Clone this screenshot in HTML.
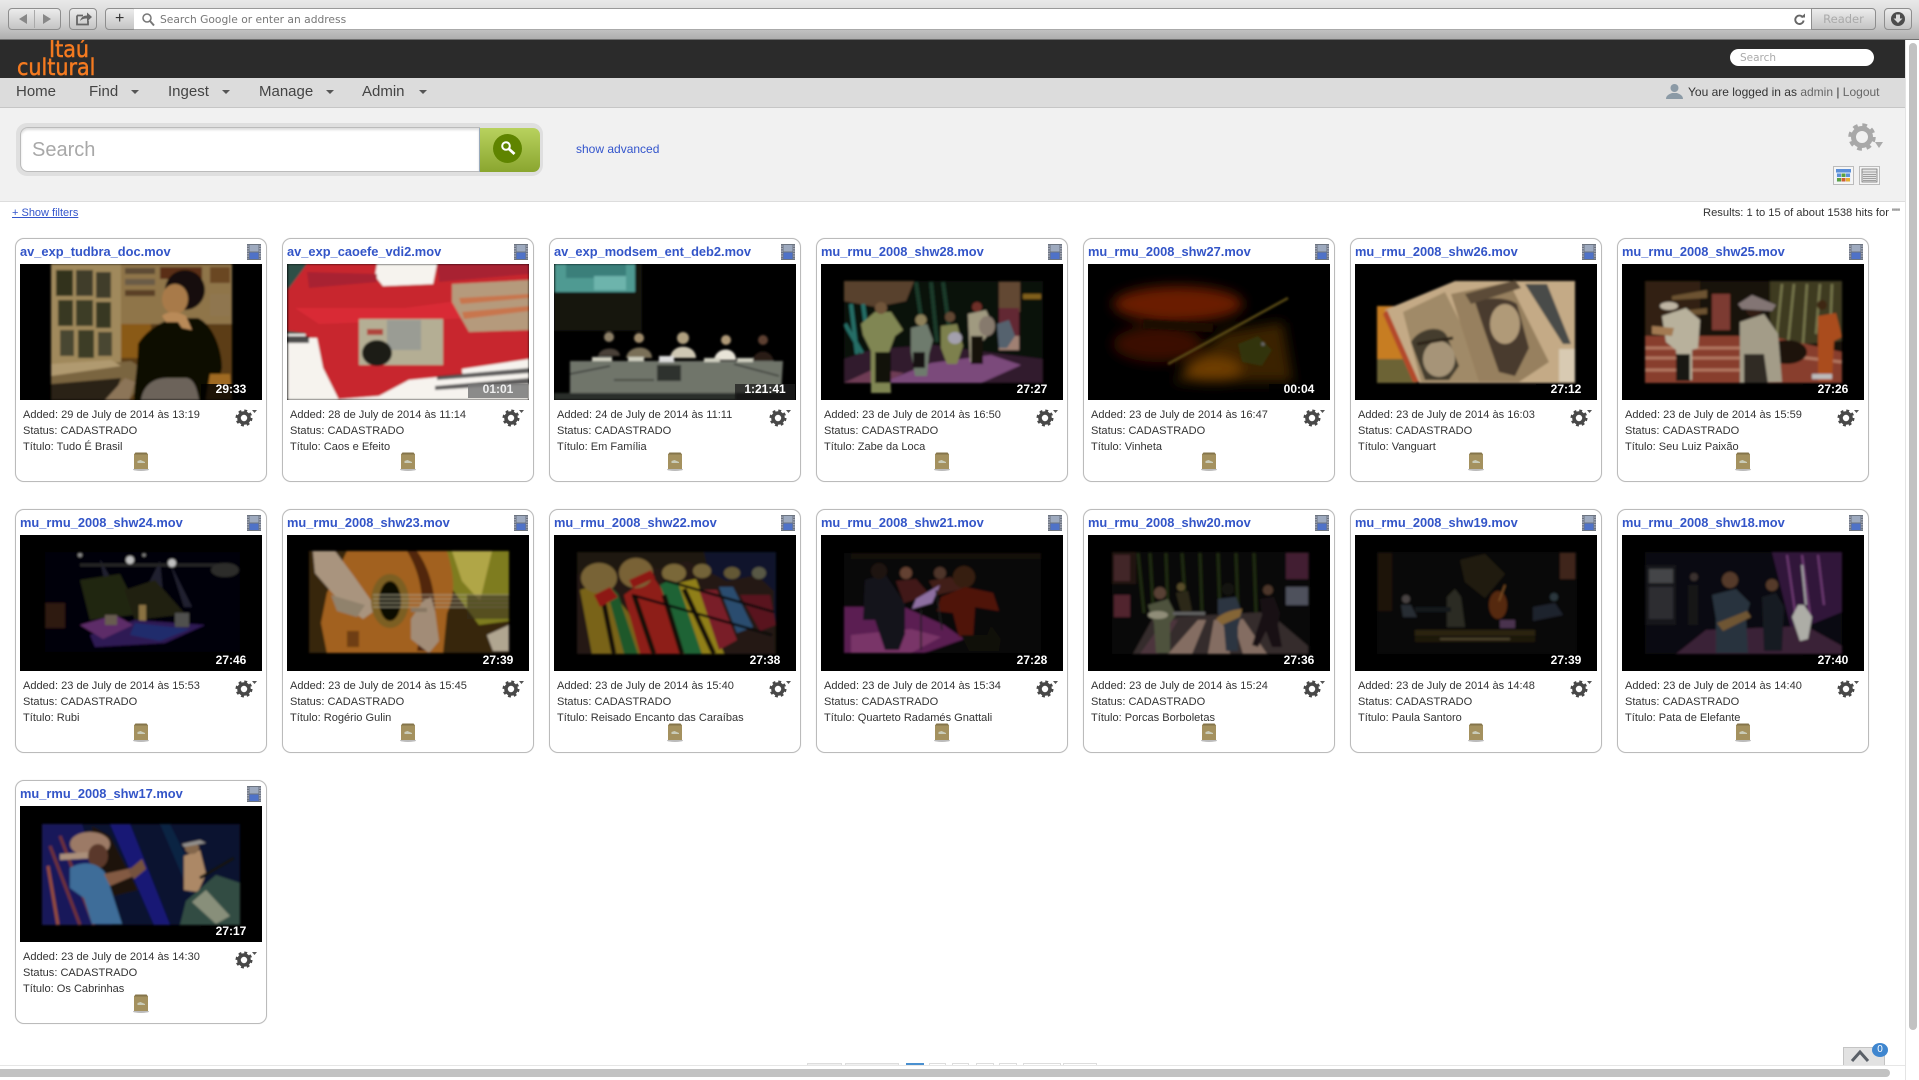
<!DOCTYPE html>
<html><head><meta charset="utf-8"><title>Itaú Cultural</title>
<style>
html,body{margin:0;padding:0;background:#fff;width:1919px;height:1080px;overflow:hidden}
body{position:relative;font-family:"Liberation Sans",sans-serif;color:#333}
div,span,a,svg{position:absolute;display:block}
a{color:#3355cc;text-decoration:none}
.sb{background:linear-gradient(#ececec,#c4c4c4);border:1px solid #8e8e8e;border-radius:4px;box-sizing:border-box;height:22px;top:8px}
.n{top:82px;font-size:15px;line-height:20px;color:#444;white-space:nowrap}
.ar{width:0;height:0;border-left:4px solid transparent;border-right:4px solid transparent;border-top:4px solid #555;top:90px}
.c{width:252px;height:244px;box-sizing:border-box;border:1px solid #bbb;border-radius:9px;background:#fff;box-shadow:0 0 1px #ddd}
.t{left:4px;top:4px;font-size:12.85px;font-weight:bold;line-height:18px;white-space:nowrap;color:#3355c8}
.f{left:231px;top:5px;width:14px;height:16px}
.th{left:4px;top:25px;width:242px;height:136px;background:#000;overflow:hidden}
.th svg{left:0;top:0;width:242px;height:136px}
.d{right:1px;top:120px;width:60px;height:16px;background:rgba(0,0,0,.82);color:#fff;font-weight:bold;font-size:12px;line-height:10px;text-align:center}
.i{left:7px;top:168px;font-size:11.05px;line-height:16px;color:#333;white-space:nowrap}
.g{left:219px;top:168px;width:22px;height:20px}
.b{left:116px;top:212px;width:18px;height:20px}
.pg{top:1063px;height:5px;border:1px solid #ddd;border-bottom:0;box-sizing:border-box;background:#fff}
</style></head><body>
<svg width="0" height="0" style="position:absolute"><defs>
<filter id="bl" x="-5%" y="-5%" width="110%" height="110%"><feGaussianBlur stdDeviation="1.1"/></filter>
<filter id="bb" x="-20%" y="-20%" width="140%" height="140%"><feGaussianBlur stdDeviation="6"/></filter>
<g id="film"><rect x="0" y="0" width="14" height="16" fill="#6c7480"/><rect x="2.500" y="1" width="9" height="6.500" fill="#9eaabf"/><rect x="2.500" y="8.500" width="9" height="6.500" fill="#4f72c8"/><path d="M1 1.500v13M13 1.500v13" stroke="#ccd" stroke-width="1.100" stroke-dasharray="1.200 1.300"/></g>
<g id="gear"><circle cx="9" cy="11" r="5" fill="none" stroke="#484848" stroke-width="3.600"/><circle cx="9" cy="11" r="7.200" fill="none" stroke="#484848" stroke-width="2.600" stroke-dasharray="2.830 2.830"/><path d="M17 3h5l-2.500 3z" fill="#555"/></g>
<g id="bag"><ellipse cx="9" cy="18.500" rx="8" ry="1.500" fill="#bbb"/><path d="M3.500 1.500h11l1.500 2v14.500h-14v-14.500z" fill="#a4915f"/><path d="M3.500 1.500h11l1.500 2h-14z" fill="#85754b"/><path d="M5.500 10l3-1 4.500 2v1h-7.500z" fill="#c9cbb8"/></g>
</defs></svg>

<!-- browser chrome -->
<div style="left:0;top:0;width:1919px;height:39px;background:linear-gradient(#e9e9e9,#d2d2d2 55%,#aeaeae)"></div>
<div style="left:0;top:39px;width:1919px;height:1px;background:#6f6f6f"></div>
<div class="sb" style="left:8px;width:53px"></div>
<div style="left:34px;top:10px;width:1px;height:18px;background:#aaa"></div>
<svg style="left:15px;top:12px" width="40" height="14"><path d="M12 2v10l-8-5zM28 2v10l8-5z" fill="#888"/></svg>
<div class="sb" style="left:69px;width:28px"></div>
<svg style="left:75px;top:11px" width="18" height="15"><path d="M2 4.500h6M2 4.500v9h11v-4" fill="none" stroke="#666" stroke-width="1.800"/><path d="M5 10c1-4 4-5.500 7-5.500v-3l5 4.500-5 4.500v-3c-3 0-5 .5-7 2.500z" fill="#666"/></svg>
<div class="sb" style="left:105px;width:32px"></div>
<div style="left:115px;top:11px;font-size:16px;line-height:16px;color:#333">+</div>
<div style="left:134px;top:8px;width:1678px;height:22px;background:#fff;border-top:1px solid #999;border-bottom:1px solid #aaa;box-sizing:border-box"></div>
<svg style="left:141px;top:12px" width="15" height="15"><circle cx="6" cy="6" r="4" fill="none" stroke="#777" stroke-width="1.500"/><path d="M9 9l4 4.500" stroke="#777" stroke-width="2"/></svg>
<div style="left:160px;top:13px;font-family:'DejaVu Sans',sans-serif;font-size:10.700px;line-height:14px;color:#777;white-space:nowrap">Search Google or enter an address</div>
<svg style="left:1793px;top:13px" width="13" height="13"><path d="M10 4.500a4.200 4.200 0 1 0 .6 3" fill="none" stroke="#666" stroke-width="1.900"/><path d="M7.500 4.500h4.500v-4z" fill="#666"/></svg>
<div class="sb" style="left:1811px;width:65px;border-radius:0 4px 4px 0;font-family:'DejaVu Sans',sans-serif;font-size:11.500px;line-height:21px;color:#aaa;text-align:center">Reader</div>
<div class="sb" style="left:1884px;width:28px"></div>
<svg style="left:1890px;top:11px" width="16" height="16"><circle cx="8" cy="8" r="7" fill="#4c4c4c"/><path d="M6 3.500h4v4h2.500l-4.500 4.500-4.500-4.500h2.500z" fill="#ddd"/></svg>

<!-- dark header -->
<div style="left:0;top:40px;width:1905px;height:38px;background:#2b2b2b;overflow:hidden">
 <div style="left:49px;top:-1px;font-family:'DejaVu Sans',sans-serif;font-size:23px;line-height:23px;color:#f47a20;-webkit-text-stroke:.5px #f47a20;transform:scaleX(.9);transform-origin:0 0;white-space:nowrap">Itaú</div>
 <div style="left:17px;top:17px;font-family:'DejaVu Sans',sans-serif;font-size:23px;line-height:23px;color:#f47a20;-webkit-text-stroke:.5px #f47a20;transform:scaleX(.9);transform-origin:0 0;white-space:nowrap">cultural</div>
 <div style="left:1730px;top:9px;width:144px;height:17px;border-radius:9px;background:#fff;font-family:'DejaVu Sans',sans-serif;font-size:10.500px;line-height:19px;color:#aaa;text-indent:10px">Search</div>
</div>

<!-- nav -->
<div style="left:0;top:78px;width:1905px;height:29px;background:#dcdcdc;border-bottom:1px solid #c6c6c6"></div>
<div class="n" style="left:16px">Home</div>
<div class="n" style="left:89px">Find</div><div class="ar" style="left:131px"></div>
<div class="n" style="left:168px">Ingest</div><div class="ar" style="left:222px"></div>
<div class="n" style="left:259px">Manage</div><div class="ar" style="left:326px"></div>
<div class="n" style="left:362px">Admin</div><div class="ar" style="left:419px"></div>
<svg style="left:1666px;top:83px" width="17" height="17"><circle cx="8.500" cy="5" r="4" fill="#8b9aa6"/><path d="M0 16c0-4 4-5 6-6h5c2 1 6 2 6 6z" fill="#8b9aa6"/></svg>
<div style="left:1688px;top:85px;font-size:12px;line-height:15px;white-space:nowrap;color:#333">You are logged in as <span style="position:static;display:inline;color:#666">admin</span> | <span style="position:static;display:inline;color:#666">Logout</span></div>

<!-- search panel -->
<div style="left:0;top:108px;width:1905px;height:94px;background:#f1f1f1;border-bottom:1px solid #ddd;box-sizing:border-box"></div>
<div style="left:16px;top:123px;width:527px;height:53px;background:#dfdfdf;border-radius:11px"></div>
<div style="left:20px;top:127px;width:460px;height:45px;background:#fff;border:1px solid #bbb;border-radius:8px 0 0 8px;box-sizing:border-box;box-shadow:inset 0 2px 2px #ddd"></div>
<div style="left:32px;top:138px;font-size:20px;line-height:24px;color:#a8a8a8">Search</div>
<div style="left:479px;top:128px;width:60px;height:44px;background:linear-gradient(#b8d25e,#8aa62f);border-radius:0 7px 7px 0;border-left:1px solid #9ab"></div>
<div style="left:493px;top:134px;width:29px;height:29px;border-radius:50%;background:#5f8400"></div>
<svg style="left:499px;top:139px" width="18" height="18"><circle cx="7" cy="7" r="3.800" fill="none" stroke="#fff" stroke-width="2"/><path d="M10 10l5.500 5" stroke="#fff" stroke-width="2.800"/></svg>
<a style="left:576px;top:142px;font-size:12px;line-height:15px;white-space:nowrap">show advanced</a>
<svg style="left:1847px;top:121px" width="38" height="32"><g transform="translate(15,16)"><circle r="8.500" fill="none" stroke="#a8a8a8" stroke-width="5"/><circle r="12" fill="none" stroke="#a8a8a8" stroke-width="3.500" stroke-dasharray="4.710 4.710"/></g><path d="M28 21h8l-4 6z" fill="#aaa"/></svg>
<svg style="left:1833px;top:166px" width="21" height="19"><rect x=".5" y=".5" width="20" height="18" fill="#f5f5f5" stroke="#bbb"/><rect x="3" y="3" width="15" height="13" fill="#eaf0fa"/><rect x="3" y="3" width="15" height="3.500" fill="#5b8fd8"/><rect x="4" y="7.500" width="4" height="3.500" fill="#5b8fd8"/><rect x="8.500" y="7.500" width="4" height="3.500" fill="#5aa040"/><rect x="13" y="7.500" width="4" height="3.500" fill="#5b8fd8"/><rect x="4" y="12" width="4" height="3.500" fill="#5aa040"/><rect x="8.500" y="12" width="4" height="3.500" fill="#d06030"/><rect x="13" y="12" width="4" height="3.500" fill="#e8b030"/></svg>
<svg style="left:1859px;top:166px" width="21" height="19"><rect x=".5" y=".5" width="20" height="18" fill="#f5f5f5" stroke="#bbb"/><rect x="3" y="3" width="15" height="13" fill="#e4e4e4" stroke="#777" stroke-width=".8"/><path d="M3 6h15M4 8.500h13M4 10.500h13M4 12.500h13M4 14.500h13" stroke="#888" stroke-width=".8"/></svg>

<a style="left:12px;top:206px;font-size:11px;line-height:14px;text-decoration:underline;white-space:nowrap">+ Show filters</a>
<div style="left:1703px;top:206px;font-size:11.200px;line-height:14px;color:#333;white-space:nowrap">Results: 1 to 15 of about 1538 hits for ""</div>

<!-- card 1 -->
<div class="c" style="left:15px;top:238px"><a class="t">av_exp_tudbra_doc.mov</a><svg class="f"><use href="#film"/></svg>
<div class="th"><svg viewBox="0 0 242 136"><g filter="url(#bl)"><rect x="31" width="181" height="136" fill="#5c3c18"/><rect x="31" width="70" height="100" fill="#a0895c"/><rect x="36" y="6" width="17" height="26" fill="#33321f"/><rect x="56" y="6" width="17" height="26" fill="#3f3e2a"/><rect x="76" y="8" width="15" height="26" fill="#3f3e2a"/><rect x="38" y="36" width="15" height="26" fill="#383722"/><rect x="56" y="36" width="17" height="26" fill="#3e3d28"/><rect x="76" y="38" width="15" height="26" fill="#383722"/><rect x="40" y="66" width="14" height="26" fill="#4a4632"/><rect x="58" y="66" width="16" height="28" fill="#3e3d28"/><rect x="78" y="68" width="14" height="24" fill="#4a4632"/><rect x="101" width="111" height="60" fill="#8f7448"/><rect x="105" y="4" width="30" height="6" fill="#5d4c36"/><rect x="105" y="15" width="30" height="6" fill="#6b5c46"/><rect x="105" y="26" width="30" height="6" fill="#5a4028"/><rect x="140" y="3" width="42" height="12" fill="#5a2e12"/><rect x="190" y="3" width="20" height="16" fill="#6a4724"/><rect x="190" y="30" width="20" height="22" fill="#8f7650"/><rect x="101" y="60" width="30" height="34" fill="#8a5a16"/><path d="M31 105l80-8 18 12-20 27H31z" fill="#7a6540"/><path d="M31 120l70-6-8 22H31z" fill="#2a2418"/><path d="M31 100l60-4 10 6-70 10z" fill="#b09a70"/><path d="M118 80c8-14 28-26 40-26h20c14 6 24 30 24 50l-8 32h-80c0-16 4-34 4-56z" fill="#0e0906"/><path d="M121 136c2-14 12-22 26-22h20c8 2 10 12 12 22z" fill="#6c645a"/><circle cx="165" cy="26" r="20" fill="#120e0c"/><ellipse cx="155" cy="35" rx="13" ry="15" fill="#a87a48"/><path d="M142 52c6-6 18-4 24 0l6 14-10-2-4-6-12 0z" fill="#b98a58"/><path d="M190 110l20 0 2 26h-26z" fill="#a06a20"/><path d="M85 136l20-22 10 4-6 18z" fill="#8c7458"/></g></svg><span class="d">29:33</span></div>
<div class="i">Added: 29 de July de 2014 às 13:19<br>Status: CADASTRADO<br>Título: Tudo É Brasil</div><svg class="g"><use href="#gear"/></svg><svg class="b"><use href="#bag"/></svg></div>

<!-- card 2 -->
<div class="c" style="left:282px;top:238px"><a class="t">av_exp_caoefe_vdi2.mov</a><svg class="f"><use href="#film"/></svg>
<div class="th"><svg viewBox="0 0 242 136"><g filter="url(#bl)"><rect width="242" height="136" fill="#f6f3ee"/><rect x="1" width="28" height="70" fill="#2f4f46"/><path d="M20 0h70l-2 12 8 10 50-2 4-20h92v100l-60 10-60 6-30 16-50 4-18-45-6-22-18-2 0-40z" fill="#c8272f"/><path d="M8 44h110l60-8 64-6v14l-60 10-150 6z" fill="#d92c36"/><path d="M20 8l70 2v8l-68 6zM150 0h92v10l-90 8z" fill="#a82330"/><path d="M165 20l77-4v50l-60 2-17-30z" fill="#b59a7c"/><path d="M172 34l70-4v4l-68 6zM175 48l67-6v5l-65 8z" fill="#c8764e"/><rect x="72" y="55" width="84" height="46" fill="#b4ae94"/><rect x="100" y="56" width="34" height="30" fill="#9a9c94"/><ellipse cx="90" cy="89" rx="15" ry="13" fill="#1a1d18"/><rect x="80" y="65" width="16" height="6" fill="#b0443c"/><path d="M0 74h30l6 30 16 32H0z" fill="#f6f3ee"/><rect x="0" y="72" width="22" height="7" fill="#222" opacity=".8"/><path d="M175 105l67-10v41h-65z" fill="#f6f3ee"/><path d="M150 112l92-8v5l-92 7zM148 122l94-8v6l-94 6z" fill="#2a2a2a" opacity=".75"/><rect y="0" width="1" height="136" fill="#000"/></g></svg><span class="d" style="background:rgba(120,120,120,.85);height:14px;color:#eee">01:01</span></div>
<div class="i">Added: 28 de July de 2014 às 11:14<br>Status: CADASTRADO<br>Título: Caos e Efeito</div><svg class="g"><use href="#gear"/></svg><svg class="b"><use href="#bag"/></svg></div>

<!-- card 3 -->
<div class="c" style="left:549px;top:238px"><a class="t">av_exp_modsem_ent_deb2.mov</a><svg class="f"><use href="#film"/></svg>
<div class="th"><svg viewBox="0 0 242 136"><g filter="url(#bl)"><rect x="0" width="88" height="67" fill="#14140c"/><rect x="1" width="80" height="28" fill="#4f9a92"/><rect x="12" y="0" width="60" height="14" fill="#3b7f7a"/><rect x="40" y="12" width="32" height="14" fill="#6db4ac"/><g><circle cx="55" cy="73" r="5" fill="#8d8068"/><path d="M44 92c2-10 22-10 22 0z" fill="#4a4038"/><circle cx="85" cy="74" r="5" fill="#a08c6c"/><path d="M72 94c2-14 26-14 26 0z" fill="#7a7058"/><circle cx="129" cy="74" r="6" fill="#b0a080"/><path d="M116 94c2-16 26-14 26 0z" fill="#cfc8b4"/><circle cx="172" cy="76" r="5" fill="#b09a78"/><path d="M160 96c2-14 22-14 22 0z" fill="#e8e4d8"/><circle cx="209" cy="76" r="5" fill="#5d4030"/><path d="M198 98c2-14 20-14 22 0z" fill="#2a1a18"/></g><path d="M16 97h213l-2 32-180 0-31 0z" fill="#6f746a"/><rect x="0" y="129" width="182" height="7" fill="#2b2d2a"/><rect x="38" y="93" width="20" height="4" fill="#cfcfc0"/><rect x="74" y="93" width="16" height="4" fill="#cfcfc0"/><rect x="105" y="92" width="15" height="6" fill="#ddd"/><rect x="150" y="94" width="16" height="4" fill="#cfcfc0"/><rect x="183" y="94" width="16" height="4" fill="#cfcfc0"/><rect x="103" y="101" width="24" height="16" fill="#2f322e"/><path d="M16 110l40-8M180 100l45 12M60 116h40" stroke="#3a3c38" stroke-width="1.500"/></g></svg><span class="d" style="background:rgba(30,30,30,.75)">1:21:41</span></div>
<div class="i">Added: 24 de July de 2014 às 11:11<br>Status: CADASTRADO<br>Título: Em Família</div><svg class="g"><use href="#gear"/></svg><svg class="b"><use href="#bag"/></svg></div>

<!-- card 4 -->
<div class="c" style="left:816px;top:238px"><a class="t">mu_rmu_2008_shw28.mov</a><svg class="f"><use href="#film"/></svg>
<div class="th"><svg viewBox="0 0 242 136" style="filter:brightness(.8)"><g filter="url(#bl)"><rect x="23" y="17" width="199" height="102" fill="#0e1210"/><path d="M23 17h70l-8 20-30 6-32-6z" fill="#6e5138"/><path d="M30 40l6 50M42 40l4 30M24 60l20 34" stroke="#2f8a80" stroke-width="4"/><path d="M95 18l10 70M110 18l6 60M122 18l8 60" stroke="#244a34" stroke-width="4"/><rect x="178" y="18" width="21" height="30" fill="#7a5a40"/><rect x="178" y="44" width="20" height="30" fill="#7a3040"/><rect x="178" y="72" width="20" height="14" fill="#c8a090"/><rect x="202" y="30" width="18" height="5" fill="#a07820"/><path d="M23 119V95l30-10 60-4 60 8 49 6v24z" fill="#3c2338"/><path d="M60 119l50-20 60-8 30 10-40 18z" fill="#9a5c9a"/><path d="M23 119l30-14 30 4-20 10z" fill="#8b4c6a"/><path d="M40 60l14-12h16l12 18-8 6-6 16 2 41h-20v-42l-8-16z" fill="#a0a868"/><path d="M54 88h16v31H54z" fill="#151210"/><circle cx="60" cy="44" r="6" fill="#8d6a48"/><path d="M90 64l16-4 6 16-4 14-2 22-12 0-4-24z" fill="#8a9a88"/><path d="M92 88h12v16H92z" fill="#1a1814"/><circle cx="100" cy="56" r="5.500" fill="#b0a070"/><path d="M120 62l16-2 6 22-6 18-10 0-6-16z" fill="#9ca060"/><circle cx="129" cy="53" r="5" fill="#7a5a40"/><ellipse cx="134" cy="74" rx="7" ry="6" fill="#ccc8d8"/><path d="M147 50l18-4 8 18-12 14-2 20h-10z" fill="#c8c0a0"/><path d="M150 72h12v28h-12z" fill="#1a1410"/><circle cx="156" cy="43" r="5" fill="#8a3a30"/><ellipse cx="166" cy="62" rx="8" ry="10" fill="#a89888"/><path d="M176 60l12-4 6 16-8 12-8 0z" fill="#6a7a8a"/></g></svg><span class="d">27:27</span></div>
<div class="i">Added: 23 de July de 2014 às 16:50<br>Status: CADASTRADO<br>Título: Zabe da Loca</div><svg class="g"><use href="#gear"/></svg><svg class="b"><use href="#bag"/></svg></div>

<!-- card 5 -->
<div class="c" style="left:1083px;top:238px"><a class="t">mu_rmu_2008_shw27.mov</a><svg class="f"><use href="#film"/></svg>
<div class="th"><svg viewBox="0 0 242 136"><g filter="url(#bb)"><ellipse cx="90" cy="40" rx="65" ry="18" fill="#6a1f06"/><ellipse cx="70" cy="80" rx="45" ry="18" fill="#3a0e06"/><path d="M85 118l50-50 60-10 10 60z" fill="#3b2106"/><ellipse cx="125" cy="105" rx="28" ry="12" fill="#6e3c06"/></g><g filter="url(#bl)"><path d="M80 100l120-66" stroke="#5a4c14" stroke-width="2.500" fill="none"/><path d="M55 60l70 4" stroke="#1a0804" stroke-width="9"/><path d="M150 80l20-8 14 14-10 16-20-4z" fill="#2c3c10" opacity=".7"/><circle cx="175" cy="80" r="2" fill="#666"/></g></svg><span class="d">00:04</span></div>
<div class="i">Added: 23 de July de 2014 às 16:47<br>Status: CADASTRADO<br>Título: Vinheta</div><svg class="g"><use href="#gear"/></svg><svg class="b"><use href="#bag"/></svg></div>

<!-- card 6 -->
<div class="c" style="left:1350px;top:238px"><a class="t">mu_rmu_2008_shw26.mov</a><svg class="f"><use href="#film"/></svg>
<div class="th"><svg viewBox="0 0 242 136"><g filter="url(#bl)"><rect x="22" y="42" width="70" height="76" fill="#c77d22"/><rect x="22" y="95" width="40" height="24" fill="#6c6436"/><path d="M30 46l70-29 120 0 0 102-156 0z" fill="#c4aa86"/><path d="M32 46l32 72h-6l-30-68z" fill="#b4482c"/><path d="M48 48l42-20 30 60 10 30h-64z" fill="#a08a68"/><path d="M56 78c8-14 30-18 36-6l12 30-10 14-24 0z" fill="#453c2e"/><ellipse cx="84" cy="95" rx="16" ry="18" fill="#a69478"/><path d="M62 80l36-6" stroke="#2c2418" stroke-width="3"/><path d="M96 30l58-12 40 80-30 20h-40z" fill="#97805e"/><path d="M120 38c14-6 34-4 42 2l12 44-14 28-16-4-14-40z" fill="#3a2f24" opacity=".85"/><ellipse cx="150" cy="60" rx="15" ry="20" fill="#b09a78"/><path d="M110 30l50-14 6 8-50 16z" fill="#5c4c38"/><path d="M170 20l22 0 24 60-8 0z" fill="#4a4c48"/><rect x="204" y="85" width="16" height="33" fill="#d8cab2"/></g></svg><span class="d">27:12</span></div>
<div class="i">Added: 23 de July de 2014 às 16:03<br>Status: CADASTRADO<br>Título: Vanguart</div><svg class="g"><use href="#gear"/></svg><svg class="b"><use href="#bag"/></svg></div>

<!-- card 7 -->
<div class="c" style="left:1617px;top:238px"><a class="t">mu_rmu_2008_shw25.mov</a><svg class="f"><use href="#film"/></svg>
<div class="th"><svg viewBox="0 0 242 136" style="filter:brightness(.85)"><g filter="url(#bl)"><rect x="23" y="17" width="197" height="102" fill="#1e1510"/><rect x="23" y="17" width="55" height="55" fill="#3a2818"/><path d="M50 32l35-6v8l-35 2zM50 48l35-4v6l-35 2z" fill="#80623a"/><rect x="90" y="30" width="18" height="36" fill="#92443a"/><path d="M148 17h72v60l-72 6z" fill="#4a4428"/><path d="M160 20l-6 60M172 20l-6 60M185 20l-4 60M198 20l-4 50M210 20l-2 50" stroke="#8a8a58" stroke-width="2.500"/><path d="M23 72l125 0 72 16v31H23z" fill="#a04a34"/><path d="M23 84h120M23 94h100M150 90l70 8M23 106h100" stroke="#d08a70" stroke-width="3"/><ellipse cx="165" cy="88" rx="20" ry="12" fill="#24160c"/><path d="M40 52l24-8 14 12-2 28-6 2 0 30-14 0-2-30-10-8z" fill="#d8d0b8"/><path d="M54 90h14v27h-14z" fill="#1e1a14"/><ellipse cx="47" cy="42" rx="9" ry="4" fill="#e0d4c0"/><path d="M30 62l22 2-2 8-20-2z" fill="#c09060"/><path d="M118 58l24-8 14 20 4 48-42 1z" fill="#c0b8a0"/><path d="M122 90h20l4 29h-24z" fill="#38302a"/><circle cx="132" cy="45" r="8" fill="#3a2416"/><path d="M116 40l14-9 24 10 -4 6-30-2z" fill="#9a8a88"/><path d="M196 52l18-3 6 24-8 4-2 40h-14l0-42z" fill="#c85a24"/><circle cx="200" cy="41" r="5" fill="#4a2e18"/><rect x="190" y="110" width="20" height="5" fill="#ddd"/></g></svg><span class="d">27:26</span></div>
<div class="i">Added: 23 de July de 2014 às 15:59<br>Status: CADASTRADO<br>Título: Seu Luiz Paixão</div><svg class="g"><use href="#gear"/></svg><svg class="b"><use href="#bag"/></svg></div>

<!-- card 8 -->
<div class="c" style="left:15px;top:509px"><a class="t">mu_rmu_2008_shw24.mov</a><svg class="f"><use href="#film"/></svg>
<div class="th"><svg viewBox="0 0 242 136" style="filter:brightness(.75)"><g filter="url(#bl)"><rect x="25" y="17" width="195" height="100" fill="#060608"/><path d="M80 24l24 44-14 6zM140 26l-20 40 24 6zM150 28l14 44h8z" fill="#4a4a70" opacity=".55"/><path d="M60 30h150" stroke="#333" stroke-width="3"/><circle cx="110" cy="25" r="4" fill="#fff"/><circle cx="152" cy="28" r="4" fill="#fff"/><circle cx="60" cy="20" r="2" fill="#bbb"/><circle cx="124" cy="20" r="1.500" fill="#bbb"/><path d="M60 45l40-6 20 40-50 6z" fill="#2c3018"/><path d="M105 55l30-10 30 34-50 6z" fill="#2a2a14"/><ellipse cx="205" cy="35" rx="14" ry="7" fill="#3a3a38"/><rect x="119" y="70" width="7" height="18" fill="#b89858"/><path d="M70 100l45-15 70 5-40 18-70 4z" fill="#3c2070"/><path d="M60 90l35-10 18 10-30 14z" fill="#7c3a8a"/><path d="M115 88l55 6-30 12-30-6z" fill="#2a3a90"/><rect x="155" y="78" width="14" height="14" fill="#6a6a68"/><path d="M25 68h20v25h-20z" fill="#3e2014"/><rect x="85" y="80" width="12" height="10" fill="#8a7a6a"/></g></svg><span class="d">27:46</span></div>
<div class="i">Added: 23 de July de 2014 às 15:53<br>Status: CADASTRADO<br>Título: Rubi</div><svg class="g"><use href="#gear"/></svg><svg class="b"><use href="#bag"/></svg></div>

<!-- card 9 -->
<div class="c" style="left:282px;top:509px"><a class="t">mu_rmu_2008_shw23.mov</a><svg class="f"><use href="#film"/></svg>
<div class="th"><svg viewBox="0 0 242 136" style="filter:brightness(.9)"><g filter="url(#bl)"><rect x="22" y="16" width="200" height="102" fill="#3c2a10"/><path d="M135 16h87v70l-30 4-30-40z" fill="#8c8a20"/><path d="M165 16h40l-12 50-18-20z" fill="#c4b850"/><path d="M60 16h100c6 20 10 40 0 62l-4 40H40l-6-30 6-30z" fill="#b46c22"/><path d="M130 16c14 20 24 50 14 100h-14c8-40 8-70-10-100z" fill="#5a2a10"/><path d="M26 16h22l18 24 24 34-14 10-22-16-26-30z" fill="#bca58c"/><path d="M44 60l34 10-8 12-20-6z" fill="#a09078"/><ellipse cx="103" cy="66" rx="19" ry="27" fill="#8a6a28"/><ellipse cx="103" cy="66" rx="11" ry="20" fill="#0e0c06"/><path d="M86 60h136M86 64h136M86 68h136M86 72h136" stroke="#c8c0a0" stroke-width=".7"/><path d="M124 84l12-18 8-4 4 14 4 30-10 12-18-14z" fill="#b49c84"/><path d="M124 75h16" stroke="#95836c" stroke-width="4"/><path d="M180 60h42v24h-42z" fill="#3a3020" opacity=".55"/><path d="M200 100l22-10v26h-16z" fill="#c4b8a0"/><rect x="60" y="96" width="12" height="16" fill="#7a4414"/></g></svg><span class="d">27:39</span></div>
<div class="i">Added: 23 de July de 2014 às 15:45<br>Status: CADASTRADO<br>Título: Rogério Gulin</div><svg class="g"><use href="#gear"/></svg><svg class="b"><use href="#bag"/></svg></div>

<!-- card 10 -->
<div class="c" style="left:549px;top:509px"><a class="t">mu_rmu_2008_shw22.mov</a><svg class="f"><use href="#film"/></svg>
<div class="th"><svg viewBox="0 0 242 136" style="filter:brightness(.72)"><g filter="url(#bl)"><rect x="23" y="17" width="199" height="102" fill="#2a2218"/><path d="M150 17h72v70l-60-20z" fill="#161c3c"/><path d="M23 40l20-14 20 10 20-14 20 12 30-8 40 20 30-6 17 16v63H23z" fill="#30201a"/><path d="M26 55l24-8 24 30 18 42H38z" fill="#a88a22"/><path d="M50 45l14 14 20 60H70z" fill="#2a7a3a"/><path d="M70 60l28-20 20 30 16 49H86z" fill="#c42a20"/><path d="M106 50l16-8 26 77h-18z" fill="#2b8a4a"/><path d="M124 48l18-4 28 75h-22z" fill="#c8b020"/><path d="M145 55l18 0 20 50-18 10z" fill="#a82a38"/><path d="M165 52l14 0 20 40-16 6z" fill="#3a6a9a"/><path d="M186 60l30 0 6 30-16 6z" fill="#7c1c2c"/><path d="M60 119l-10-50M100 119L80 60M128 119L110 60M160 119l-30-65" stroke="#1a1408" stroke-width="5"/><ellipse cx="45" cy="43" rx="18" ry="15" fill="#a78a4c"/><ellipse cx="82" cy="38" rx="17" ry="15" fill="#a8884c"/><ellipse cx="120" cy="38" rx="12" ry="9" fill="#aa9050"/><ellipse cx="148" cy="36" rx="9" ry="7" fill="#a08a50"/><ellipse cx="178" cy="38" rx="8" ry="6" fill="#8a7a4a"/><ellipse cx="205" cy="38" rx="7" ry="6" fill="#7a7a60"/><path d="M40 60l16-8 8 10-18 10zM75 45l22-10 4 8-22 10z" fill="#c4241c"/><path d="M110 45l110 32M78 60l140 40" stroke="#0c0c0c" stroke-width="2.500"/></g></svg><span class="d">27:38</span></div>
<div class="i">Added: 23 de July de 2014 às 15:40<br>Status: CADASTRADO<br>Título: Reisado Encanto das Caraíbas</div><svg class="g"><use href="#gear"/></svg><svg class="b"><use href="#bag"/></svg></div>

<!-- card 11 -->
<div class="c" style="left:816px;top:509px"><a class="t">mu_rmu_2008_shw21.mov</a><svg class="f"><use href="#film"/></svg>
<div class="th"><svg viewBox="0 0 242 136" style="filter:brightness(.72)"><g filter="url(#bl)"><rect x="23" y="18" width="197" height="100" fill="#0e0b08"/><path d="M23 72h60l40 18 20 14-40 14H23z" fill="#7e2c72"/><path d="M30 100l60-6 30 8-30 16H30z" fill="#a84a90"/><path d="M44 45l20-6 20 30 0 30-6 16-14 0-10-30-12 0z" fill="#1e1a28"/><circle cx="58" cy="36" r="8" fill="#2a1a14"/><circle cx="85" cy="38" r="6" fill="#8a5a44"/><path d="M75 46l20-2 14 16-26 8z" fill="#5a2420"/><circle cx="119" cy="38" r="6" fill="#6c4a3a"/><path d="M108 46l22-4 12 12-26 6z" fill="#5a2a22"/><path d="M95 64l24-14-8 18-20 6z" fill="#c49ae0"/><circle cx="143" cy="42" r="11" fill="#4c2c16"/><path d="M120 62l24-10 28 6 6 18-24-4-2 30-14 0-6-24-16-2z" fill="#6e1a10"/><rect x="30" y="18" width="190" height="6" fill="#1c1408"/><path d="M140 100h26l4-10 10 14-2 12h-30z" fill="#141210"/><path d="M115 55l6 40M100 75v40" stroke="#2a2a2a" stroke-width="1.500"/></g></svg><span class="d">27:28</span></div>
<div class="i">Added: 23 de July de 2014 às 15:34<br>Status: CADASTRADO<br>Título: Quarteto Radamés Gnattali</div><svg class="g"><use href="#gear"/></svg><svg class="b"><use href="#bag"/></svg></div>

<!-- card 12 -->
<div class="c" style="left:1083px;top:509px"><a class="t">mu_rmu_2008_shw20.mov</a><svg class="f"><use href="#film"/></svg>
<div class="th"><svg viewBox="0 0 242 136" style="filter:brightness(.72)"><g filter="url(#bl)"><rect x="24" y="17" width="198" height="102" fill="#0c0f08"/><rect x="24" y="17" width="24" height="32" fill="#2e1c18"/><rect x="26" y="20" width="16" height="26" fill="#5c3438"/><rect x="26" y="60" width="16" height="22" fill="#703040"/><path d="M50 18l6 60M62 18l4 70M78 18l2 60M94 18l4 60M112 18l2 60M130 18l2 60M148 18l2 60M166 18l2 60" stroke="#2c3a18" stroke-width="3"/><rect x="198" y="18" width="22" height="26" fill="#5c2c44"/><rect x="198" y="52" width="22" height="18" fill="#6c7080"/><path d="M45 119l20-36 115-6 40 34v8z" fill="#4a3c3c"/><path d="M80 119l30-34 8 0-14 34zM120 119l6-34 10 0 6 34zM155 119l-10-34 10-1 24 35z" fill="#b89888"/><path d="M52 119l24-34 14 0-20 34z" fill="#6a4a54"/><path d="M60 70l20-6 8 16-6 8 0 30-14 0-2-30z" fill="#6c7254"/><circle cx="72" cy="58" r="6" fill="#7a5a48"/><ellipse cx="70" cy="80" rx="10" ry="4" fill="#c8c4a8"/><path d="M130 64l18-2 6 16-4 14 0 24-12 0-2-24-6-14z" fill="#3c4a5a"/><circle cx="140" cy="54" r="6" fill="#1e1a14"/><path d="M128 84c8-8 22-10 26-10l-2 8-18 8z" fill="#b88c4c"/><path d="M172 64l14-2 6 16-2 12 4 22-10 0-6-16-8 16-6-2 10-30z" fill="#20181a"/><circle cx="180" cy="55" r="5" fill="#6a4c3a"/><path d="M88 58l12-2 4 20-10 4z" fill="#3c3824"/><circle cx="93" cy="52" r="4" fill="#7a6a3a"/><rect x="85" y="77" width="32" height="3" fill="#888"/></g></svg><span class="d">27:36</span></div>
<div class="i">Added: 23 de July de 2014 às 15:24<br>Status: CADASTRADO<br>Título: Porcas Borboletas</div><svg class="g"><use href="#gear"/></svg><svg class="b"><use href="#bag"/></svg></div>

<!-- card 13 -->
<div class="c" style="left:1350px;top:509px"><a class="t">mu_rmu_2008_shw19.mov</a><svg class="f"><use href="#film"/></svg>
<div class="th"><svg viewBox="0 0 242 136" style="filter:brightness(.7)"><g filter="url(#bl)"><rect x="22" y="17" width="200" height="102" fill="#0a0b07"/><rect x="23" y="18" width="14" height="58" fill="#2c1c10"/><rect x="205" y="18" width="15" height="26" fill="#5a3428"/><path d="M105 25l25-6 20 20-20 24-20-16z" fill="#2e2818"/><circle cx="51" cy="64" r="4" fill="#686060"/><path d="M46 70l10 0 6 12h-14z" fill="#38404a"/><path d="M92 62l8-8 6 8 4 30-18 0z" fill="#3c3e32"/><ellipse cx="143" cy="70" rx="9" ry="14" fill="#7a3a14"/><path d="M150 50l-6 16" stroke="#b07030" stroke-width="1.500"/><path d="M60 72h36v5H60z" fill="#1e2226"/><path d="M178 72l22 -4 8 12-30 6z" fill="#2a3040"/><circle cx="199" cy="62" r="4" fill="#3c5058"/><rect x="60" y="95" width="120" height="6" fill="#3c3218"/><rect x="60" y="102" width="120" height="5" fill="#2a2410"/><rect x="85" y="103" width="70" height="2" fill="#6c6040"/><rect x="145" y="85" width="15" height="8" fill="#6a4a70"/></g></svg><span class="d">27:39</span></div>
<div class="i">Added: 23 de July de 2014 às 14:48<br>Status: CADASTRADO<br>Título: Paula Santoro</div><svg class="g"><use href="#gear"/></svg><svg class="b"><use href="#bag"/></svg></div>

<!-- card 14 -->
<div class="c" style="left:1617px;top:509px"><a class="t">mu_rmu_2008_shw18.mov</a><svg class="f"><use href="#film"/></svg>
<div class="th"><svg viewBox="0 0 242 136" style="filter:brightness(.8)"><g filter="url(#bl)"><rect x="23" y="17" width="197" height="102" fill="#100c12"/><path d="M150 17h70v60l-50 20z" fill="#3c1a48"/><path d="M165 20l10 70M180 20l8 60M196 20l6 50" stroke="#8a4a90" stroke-width="2"/><rect x="24" y="30" width="30" height="60" fill="#1e1e20"/><rect x="27" y="34" width="24" height="14" fill="#55565a"/><rect x="27" y="52" width="24" height="32" fill="#38383c"/><path d="M54 119l30-24 100-4 36 20v8z" fill="#4a2a44"/><path d="M90 60l24-6 14 14-4 14 2 36-32 0 0-34z" fill="#33404e"/><circle cx="108" cy="45" r="8" fill="#6a4a34"/><path d="M95 88l30-12 4 6-28 14z" fill="#8a6a40"/><path d="M140 62l14-4 8 14-2 44-18 0z" fill="#1c242c"/><circle cx="150" cy="50" r="6" fill="#6a4a34"/><rect x="66" y="50" width="10" height="40" fill="#1a1a1a"/><circle cx="72" cy="42" r="4" fill="#4a3c3a"/><path d="M176 70l-6 12 8 24 8-2 4-22-8-12z" fill="#d8d8d0"/><path d="M180 30l4 40" stroke="#ccc" stroke-width="2"/></g></svg><span class="d">27:40</span></div>
<div class="i">Added: 23 de July de 2014 às 14:40<br>Status: CADASTRADO<br>Título: Pata de Elefante</div><svg class="g"><use href="#gear"/></svg><svg class="b"><use href="#bag"/></svg></div>

<!-- card 15 -->
<div class="c" style="left:15px;top:780px"><a class="t">mu_rmu_2008_shw17.mov</a><svg class="f"><use href="#film"/></svg>
<div class="th"><svg viewBox="0 0 242 136" style="filter:brightness(.85)"><g filter="url(#bl)"><rect x="22" y="18" width="198" height="101" fill="#0c1438"/><path d="M22 18h40l30 101H22z" fill="#1f1f6a"/><path d="M110 18l40 101-16 0-44-101z" fill="#1a1a8a"/><path d="M150 18l30 60-10 10-30-70z" fill="#102a50"/><path d="M30 40l30 79M40 30l34 89" stroke="#823a40" stroke-width="3"/><path d="M28 60l10 59" stroke="#b05a44" stroke-width="3"/><path d="M72 20l18 10 28 54 -40 10z" fill="#241808"/><ellipse cx="70" cy="38" rx="20" ry="12" fill="#b89078"/><path d="M40 48l30-2 6 6-36 2z" fill="#c8a890"/><ellipse cx="78" cy="50" rx="10" ry="12" fill="#6a4230"/><path d="M50 62c10-6 26-8 36 6l16 50H72l-8-26-14-10z" fill="#4a80b4"/><path d="M84 68l28-6 8-6-2 12-28 12z" fill="#9a6a50"/><path d="M108 65l14-12 4 10-12 10z" fill="#8a6048"/><path d="M164 50l16-6 6 24-8 18-14-2z" fill="#caa078"/><ellipse cx="172" cy="42" rx="7" ry="6" fill="#9a7858"/><path d="M162 38l18-4 6 3-22 4z" fill="#aca8a4"/><path d="M160 119l6-24 30-26 24 8v42z" fill="#3a5a50"/><path d="M172 96l14-12 24 26-14 8z" fill="#a0a890"/><path d="M180 72l34-20" stroke="#141410" stroke-width="3"/></g></svg><span class="d">27:17</span></div>
<div class="i">Added: 23 de July de 2014 às 14:30<br>Status: CADASTRADO<br>Título: Os Cabrinhas</div><svg class="g"><use href="#gear"/></svg><svg class="b"><use href="#bag"/></svg></div>

<!-- bottom pagination fragments -->
<div class="pg" style="left:807px;width:35px;background:#f0f0f0"></div>
<div class="pg" style="left:845px;width:54px;background:#f0f0f0"></div>
<div class="pg" style="left:906px;width:18px;background:#4a90d0;border-color:#4a90d0"></div>
<div class="pg" style="left:929px;width:17px"></div>
<div class="pg" style="left:952px;width:17px"></div>
<div class="pg" style="left:976px;width:18px"></div>
<div class="pg" style="left:999px;width:18px"></div>
<div class="pg" style="left:1023px;width:38px"></div>
<div class="pg" style="left:1063px;width:34px"></div>
<div style="left:1843px;top:1047px;width:42px;height:20px;background:#e2e2e2;border:1px solid #c4c4c4;border-bottom:0;box-sizing:border-box"></div>
<svg style="left:1849px;top:1047px" width="22" height="16"><path d="M3 14l8-9 8 9" fill="none" stroke="#5a6068" stroke-width="3"/></svg>
<div style="left:1872px;top:1043px;width:16px;height:14px;border-radius:50%;background:#3f86cf;color:#fff;font-size:10px;line-height:14px;text-align:center">0</div>

<!-- scrollbars -->
<div style="left:0;top:1065px;width:1905px;height:15px;background:#fff;border-top:1px solid #e6e6e6;box-sizing:border-box"></div>
<div style="left:0;top:1069px;width:1890px;height:8px;background:#c2c2c2;border-radius:0 4px 4px 0"></div>
<div style="left:1905px;top:40px;width:14px;height:1040px;background:#fff;border-left:1px solid #e4e4e4;box-sizing:border-box"></div>
<div style="left:1909px;top:43px;width:8px;height:987px;background:#c2c2c2;border-radius:4px"></div>
</body></html>
